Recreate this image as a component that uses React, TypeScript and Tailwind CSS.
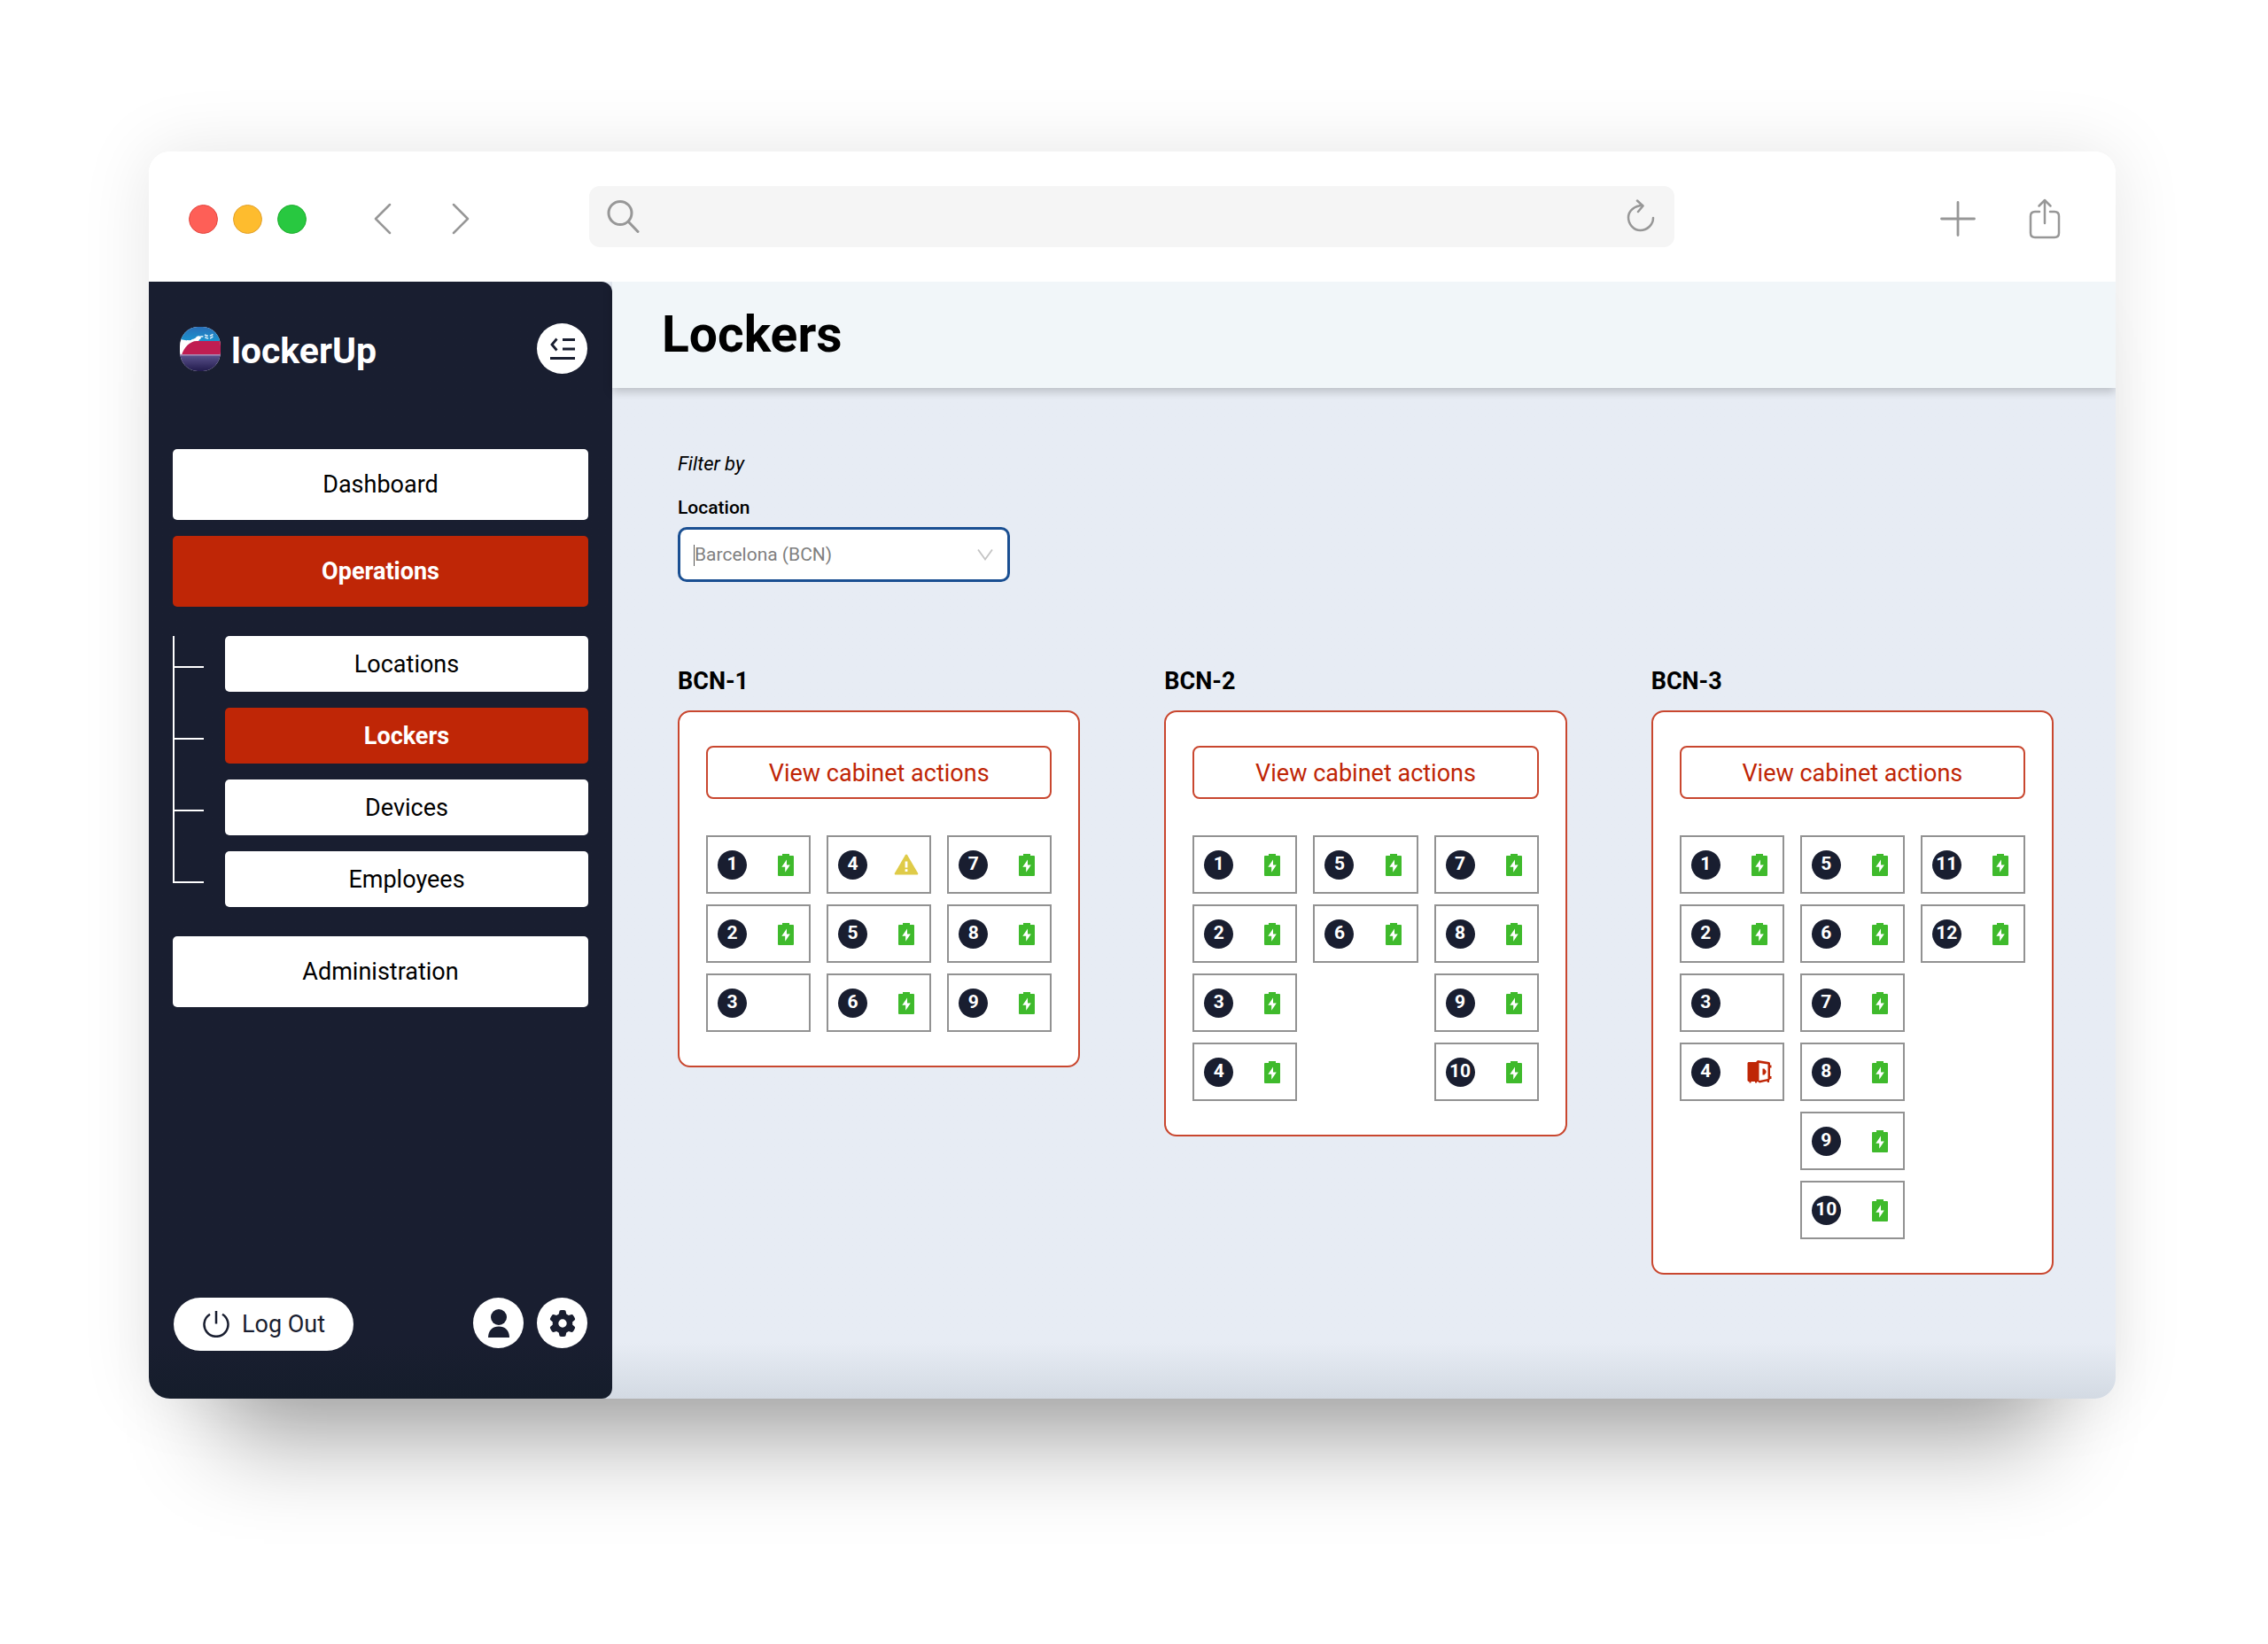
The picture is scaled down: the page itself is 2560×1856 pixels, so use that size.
import { useState } from "react";
import clsx from "clsx";
import { FaGear } from "react-icons/fa6";

type SlotStatus = "charging" | "warning" | "open" | "empty";

interface Slot {
  id: number;
  status: SlotStatus;
}

interface Cabinet {
  name: string;
  columns: Slot[][];
}

const slots = (
  from: number,
  to: number,
  overrides: Record<number, SlotStatus> = {}
): Slot[] =>
  Array.from({ length: to - from + 1 }, (_, i) => ({
    id: from + i,
    status: overrides[from + i] ?? "charging",
  }));

const cabinets: Cabinet[] = [
  {
    name: "BCN-1",
    columns: [
      slots(1, 3, { 3: "empty" }),
      slots(4, 6, { 4: "warning" }),
      slots(7, 9),
    ],
  },
  { name: "BCN-2", columns: [slots(1, 4), slots(5, 6), slots(7, 10)] },
  {
    name: "BCN-3",
    columns: [
      slots(1, 4, { 3: "empty", 4: "open" }),
      slots(5, 10),
      slots(11, 12),
    ],
  },
];

const operations = ["Locations", "Lockers", "Devices", "Employees"];

function BatteryIcon() {
  return (
    <svg width="18" height="25" viewBox="0 0 18 25" aria-label="Charging">
      <path
        fill="#3fba2c"
        d="M5 0h8v2h4a1 1 0 0 1 1 1v21a1 1 0 0 1-1 1H1a1 1 0 0 1-1-1V3a1 1 0 0 1 1-1h4z"
      />
      <path fill="#fff" d="M10 6.5 4.3 14.7h3.9v6.1l5.6-8.3H10z" />
    </svg>
  );
}

function WarningIcon() {
  return (
    <svg width="28" height="24" viewBox="0 0 28 24" aria-label="Warning">
      <path
        fill="#dfcb48"
        d="M12.9 1.2a1.3 1.3 0 0 1 2.2 0l12 20.6a1.2 1.2 0 0 1-1 1.8H1.9a1.2 1.2 0 0 1-1-1.8z"
      />
      <path fill="#fff" d="M12.6 8.500h2.800v7h-2.800zM12.600 17.200h2.800v2.800h-2.800z" />
    </svg>
  );
}

function OpenDoorIcon() {
  return (
    <svg width="28" height="26" viewBox="0 0 28 26" aria-label="Door open">
      <path
        fill="#bf2606"
        d="M1.500 2H10l2-2 13 2 1 1v2.500h1.500v3H26V18h1.500v3H26l-1 2v2h-2l-.5-1.500L14 25.500l-2-1.500-1 .5v1H9V24H4.500v1.500h-2V24H1.500L.5 23V3z"
      />
      <path fill="#fff" d="M13.500 3 23.500 4.500v16.500l-10 2z" />
      <path fill="#bf2606" d="M17.500 9.500h2l2 2.500v2l-2 2.500h-2z" />
    </svg>
  );
}

function LogoMark() {
  return (
    <svg width="46" height="50" viewBox="0 0 46 50" aria-hidden="true">
      <defs>
        <clipPath id="mark">
          <rect width="46" height="50" rx="20" ry="22" />
        </clipPath>
        <linearGradient id="sky" x1="0" y1="0" x2="0" y2="1">
          <stop offset="0" stopColor="#2a6fb8" />
          <stop offset="1" stopColor="#1a93cf" />
        </linearGradient>
        <linearGradient id="sea" x1="0" y1="0" x2="0" y2="1">
          <stop offset="0" stopColor="#5e5590" />
          <stop offset="1" stopColor="#221b4c" />
        </linearGradient>
      </defs>
      <g clipPath="url(#mark)">
        <rect width="46" height="50" fill="#fff" />
        <path fill="url(#sky)" d="M0 0h46v16H17Q9 16 0 14z" />
        <path
          stroke="#d8ecf7"
          strokeWidth="1.500"
          strokeDasharray="4 2"
          fill="none"
          d="M17 14q7-5 12-2t9-2M28 9q5 3 10-1M13 15q6-1 9-4"
        />
        <path fill="#fff" d="M8 15q8 1 11-4 4-2 5 2-2 1-3 3H8z" />
        <path fill="#c01d52" d="M46 16H19C11 16 4 24 2 32h44z" />
        <rect y="31" width="46" height="19" fill="url(#sea)" />
        <rect y="31" width="46" height="1.500" fill="#a98bb5" />
      </g>
    </svg>
  );
}

function StatusIcon({ status }: { status: SlotStatus }) {
  if (status === "charging") return <BatteryIcon />;
  if (status === "warning") return <WarningIcon />;
  if (status === "open") return <OpenDoorIcon />;
  return null;
}

function NavButton({
  label,
  active = false,
  small = false,
}: {
  label: string;
  active?: boolean;
  small?: boolean;
}) {
  return (
    <button
      className={clsx(
        "w-full rounded-[5px] text-[27px] leading-8 cursor-pointer",
        small ? "h-[63px]" : "h-20",
        active ? "bg-[#bf2606] font-bold text-white" : "bg-white text-black"
      )}
    >
      {label}
    </button>
  );
}

function Toolbar() {
  return (
    <div className="relative z-10 flex items-center bg-white h-[147px] pl-[45px] pr-[62px] pb-px text-[#979797]">
      <div className="flex items-center gap-[17px] pt-[6px]">
        <span className="size-[33px] rounded-full border border-[#e2463f] bg-[#fe5f57]" />
        <span className="size-[33px] rounded-full border border-[#e1a02b] bg-[#febc2e]" />
        <span className="size-[33px] rounded-full border border-[#1dac2c] bg-[#28c840]" />
      </div>
      <div className="flex items-center gap-[68px] pt-[6px] pl-[76px]">
        <button aria-label="Back" className="cursor-pointer">
          <svg width="20" height="36" viewBox="0 0 20 36" fill="none" stroke="currentColor" strokeWidth="2.500" strokeLinecap="round" strokeLinejoin="round">
            <path d="M18 2 2 18l16 16" />
          </svg>
        </button>
        <button aria-label="Forward" className="cursor-pointer">
          <svg width="20" height="36" viewBox="0 0 20 36" fill="none" stroke="currentColor" strokeWidth="2.500" strokeLinecap="round" strokeLinejoin="round">
            <path d="m2 2 16 16L2 34" />
          </svg>
        </button>
      </div>
      <div className="flex flex-1 items-center h-[69px] rounded-xl bg-[#f5f5f5] ml-[135px] mr-[300px] pl-5 pr-[22px]">
        <svg width="38" height="38" viewBox="0 0 38 38" fill="none" stroke="currentColor" strokeWidth="3" strokeLinecap="round">
          <circle cx="15" cy="15.500" r="13" />
          <path d="m24.500 25.500 10.500 11" />
        </svg>
        <input aria-label="Address" className="flex-1 min-w-0 px-4 text-[27px] text-black outline-none" />
        <button aria-label="Reload" className="cursor-pointer">
          <svg width="32" height="38" viewBox="0 0 32 38" fill="none" stroke="currentColor" strokeWidth="2.500" strokeLinecap="round" strokeLinejoin="round">
            <path d="M18 7C9 7 2 13 2 20.500S8 35 15.500 35 30 29 30 21" />
            <path d="m12 1.500 6.500 6L13 14" />
          </svg>
        </button>
      </div>
      <div className="flex items-center gap-[60px] pt-[6px]">
        <button aria-label="New tab" className="cursor-pointer">
          <svg width="40" height="40" viewBox="0 0 40 40" fill="none" stroke="currentColor" strokeWidth="2.800" strokeLinecap="round">
            <path d="M20 1.500v37M1.500 20h37" />
          </svg>
        </button>
        <button aria-label="Share" className="cursor-pointer">
          <svg width="36" height="46" viewBox="0 0 36 46" fill="none" stroke="currentColor" strokeWidth="2.500" strokeLinecap="round" strokeLinejoin="round">
            <path d="M12 15H7q-5 0-5 5v19q0 5 5 5h22q5 0 5-5V20q0-5-5-5h-5" />
            <path d="M18 28V2M11.500 8.500 18 2l6.500 6.500" />
          </svg>
        </button>
      </div>
    </div>
  );
}

function Sidebar() {
  return (
    <aside className="flex flex-col w-[523px] shrink-0 rounded-r-xl bg-[#191e30] bg-linear-to-t from-[#151d2b] to-[#191e30] to-5% pl-[27px] pr-[27px] pt-[47px] pb-[54px]">
      <div className="flex items-center justify-between pl-2 pr-px">
        <div className="flex items-center gap-3">
          <LogoMark />
          <span className="pt-1 text-[41px] leading-[48px] font-bold text-white">lockerUp</span>
        </div>
        <button aria-label="Collapse menu" className="flex items-center justify-center size-[57px] rounded-full bg-white cursor-pointer">
          <svg width="28" height="26" viewBox="0 0 28 26" fill="none" stroke="#191e30" strokeWidth="2.800">
            <path d="M14 2.500h14M14 13h14M0 23.500h28M7.500 1.500 2 8l5.500 6.500" />
          </svg>
        </button>
      </div>

      <nav className="flex flex-col gap-[33px] pt-[85px]">
        <div className="flex flex-col gap-[18px]">
          <NavButton label="Dashboard" />
          <NavButton label="Operations" active />
        </div>
        <ul className="flex flex-col">
          {operations.map((name, i) => {
            const last = i === operations.length - 1;
            return (
              <li key={name} className="flex">
                {/* tree branch leading to the item */}
                <div className="flex flex-col w-[59px] shrink-0">
                  <span className="w-[35px] h-9 border-l-2 border-b-2 border-white" />
                  {!last && <span className="flex-1 border-l-2 border-white" />}
                </div>
                <div className={clsx("flex-1", !last && "pb-[18px]")}>
                  <NavButton label={name} active={name === "Lockers"} small />
                </div>
              </li>
            );
          })}
        </ul>
        <NavButton label="Administration" />
      </nav>

      <div className="flex items-start gap-[15px] mt-auto px-px">
        <button className="flex items-center gap-[14px] h-[60px] mr-auto rounded-full bg-white pl-[33px] pr-8 text-[27px] leading-8 text-[#191e30] cursor-pointer">
          <svg width="30" height="30" viewBox="0 0 30 30" fill="none" stroke="currentColor" strokeWidth="2.500">
            <path d="M15 0v14.500M8 3.800a13.500 13.500 0 1 0 14 0" />
          </svg>
          Log Out
        </button>
        <button aria-label="Profile" className="flex items-center justify-center size-[57px] rounded-full bg-white text-[#191e30] cursor-pointer">
          <svg width="24" height="32" viewBox="0 0 24 32" fill="currentColor">
            <circle cx="12" cy="9" r="9" />
            <path d="M0 32C0 24 5 19.500 12 19.500S24 24 24 32z" />
          </svg>
        </button>
        <button aria-label="Settings" className="flex items-center justify-center size-[57px] rounded-full bg-white text-[#191e30] cursor-pointer">
          <FaGear size={30} />
        </button>
      </div>
    </aside>
  );
}

function CabinetCard({ cabinet }: { cabinet: Cabinet }) {
  return (
    <section>
      <h2 className="text-[27px] leading-8 font-bold">{cabinet.name}</h2>
      <div className="mt-[17px] px-[30px] py-[38px] rounded-[14px] border-2 border-[#c9472f] bg-white">
        <button className="w-full h-[60px] pt-0.5 rounded-lg border-2 border-[#c9472f] text-[27px] leading-8 text-[#bf2606] cursor-pointer">
          View cabinet actions
        </button>
        <div className="grid grid-cols-3 gap-[18px] mt-[41px]">
          {cabinet.columns.map((column, i) => (
            <div key={i} className="flex flex-col gap-3">
              {column.map((slot) => (
                <div
                  key={slot.id}
                  className="flex items-center justify-between h-[66px] pl-[11px] pr-3 border-2 border-[#929292]"
                >
                  <span className="flex items-center justify-center size-[33px] rounded-full bg-[#191e30] text-[21px] font-bold text-white">
                    {slot.id}
                  </span>
                  <span className="flex justify-center w-7">
                    <StatusIcon status={slot.status} />
                  </span>
                </div>
              ))}
            </div>
          ))}
        </div>
      </div>
    </section>
  );
}

export default function App() {
  const [location, setLocation] = useState("BCN");

  return (
    <div className="flex flex-col min-h-screen bg-white pt-[171px] pb-[277px] pl-[168px] pr-[172px] font-[Roboto,sans-serif] text-black">
      <div className="flex flex-col flex-1 overflow-hidden rounded-3xl shadow-[0_0_80px_rgba(0,0,0,0.1),0_130px_100px_-80px_rgba(0,0,0,0.32)]">
        <Toolbar />
        <div className="flex flex-1 bg-[#e7ecf4] bg-linear-to-t from-[#d3dae3] to-[#e7ecf4] to-5%">
          <Sidebar />
          <main className="flex flex-col flex-1 min-w-0">
            <header className="flex items-center h-[120px] pl-14 bg-[#f1f6f9] shadow-[0_4px_10px_rgba(0,0,0,0.2)]">
              <h1 className="text-[57px] leading-[64px] font-bold">Lockers</h1>
            </header>

            <div className="pl-[74px] pr-[70px] pt-[70px]">
              <p className="text-[22px] leading-8 italic">Filter by</p>
              <label htmlFor="location" className="block mt-[17px] text-[21px] leading-8 font-medium">
                Location
              </label>
              <div className="relative w-[375px] mt-[6px]">
                <select
                  id="location"
                  value={location}
                  onChange={(e) => setLocation(e.target.value)}
                  className="appearance-none w-full h-[62px] pl-4 pr-12 pt-0.5 rounded-[10px] border-3 border-[#1a4f92] bg-white text-[21px] text-[#808080] outline-none"
                >
                  <option value="BCN">Barcelona (BCN)</option>
                </select>
                <span className="absolute left-[18px] top-5 w-px h-6 bg-[#555555] pointer-events-none" />
                <svg className="absolute right-[19px] top-[25px] pointer-events-none" width="18" height="13" viewBox="0 0 18 13" fill="none" stroke="#c4c4c4" strokeWidth="1.800">
                  <path d="m1 0.500 8 11 8-11" />
                </svg>
              </div>

              <div className="grid grid-cols-3 items-start gap-[95px] mt-24">
                {cabinets.map((cabinet) => (
                  <CabinetCard key={cabinet.name} cabinet={cabinet} />
                ))}
              </div>
            </div>
          </main>
        </div>
      </div>
    </div>
  );
}
